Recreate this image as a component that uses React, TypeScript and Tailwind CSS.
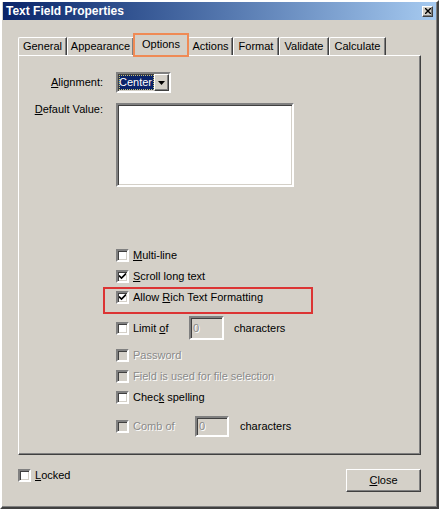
import React from 'react';

const sunken =
  'border-2 border-t-[#808080] border-l-[#808080] border-b-white border-r-white shadow-[inset_1px_1px_0_#404040,inset_-1px_-1px_0_#d4d0c8]';
const raised =
  'border border-t-white border-l-white border-b-[#404040] border-r-[#404040] shadow-[inset_-1px_-1px_0_#808080]';

function U({ children }: { children: React.ReactNode }) {
  return <span className="underline underline-offset-[1px] decoration-1">{children}</span>;
}

function Check({ checked, disabled }: { checked?: boolean; disabled?: boolean }) {
  return (
    <div
      className={`w-[13px] h-[13px] shrink-0 flex items-center justify-center ${sunken} ${
        disabled ? 'bg-[#d4d0c8]' : 'bg-white'
      }`}
    >
      {checked && (
        <svg width="7" height="7" viewBox="0 0 7 7">
          <path d="M0 2.5 L2.5 5 L7 0.5" fill="none" stroke="#000" strokeWidth="1.6" />
        </svg>
      )}
    </div>
  );
}

function Row({
  children,
  checked,
  disabled,
  className = 'h-[21px]'
}: {
  children: React.ReactNode;
  checked?: boolean;
  disabled?: boolean;
  className?: string;
}) {
  return (
    <div className={`relative flex items-center ${className}`}>
      <Check checked={checked} disabled={disabled} />
      <span
        className={`ml-[4px] whitespace-nowrap ${
          disabled ? 'text-[#8a8a8a] [text-shadow:1px_1px_0_#fff]' : 'text-black'
        }`}
      >
        {children}
      </span>
    </div>
  );
}

function NumBox({ w, h }: { w: string; h: string }) {
  return (
    <div className={`${w} ${h} ${sunken} bg-[#d4d0c8] flex items-center pl-[2px] text-[#8a8a8a] [text-shadow:1px_1px_0_#fff]`}>
      0
    </div>
  );
}

const tabs = [
  { label: 'General', w: 'w-[49px]' },
  { label: 'Appearance', w: 'w-[67px]' },
  { label: 'Options', w: 'w-[54px]', active: true },
  { label: 'Actions', w: 'w-[45px]' },
  { label: 'Format', w: 'w-[46px]' },
  { label: 'Validate', w: 'w-[50px]' },
  { label: 'Calculate', w: 'w-[57px]' }
];

export default function App() {
  return (
    <div className="w-[439px] h-[509px] bg-[#d4d0c8] font-['Liberation_Sans',Arial,sans-serif] text-[11px] text-black border-2 border-t-white border-l-white border-b-[#404040] border-r-[#404040] shadow-[inset_-1px_-1px_0_#808080] flex flex-col overflow-hidden">
      {/* Title bar */}
      <div className="h-[18px] mx-px flex items-center justify-between bg-gradient-to-r from-[#0a246a] to-[#a6caf0] pl-[3px] pr-[3px]">
        <span className="text-white font-bold text-[12px] leading-none">Text Field Properties</span>
        <div className={`w-[11px] h-[11px] bg-[#d4d0c8] flex items-center justify-center ${raised}`}>
          <svg width="6" height="6" viewBox="0 0 6 6">
            <path d="M0 0 L6 6 M6 0 L0 6" stroke="#000" strokeWidth="1.4" />
          </svg>
        </div>
      </div>

      {/* Tabs */}
      <div className="mt-[14px] ml-[16px] flex items-end h-[21px]">
        {tabs.map((t) =>
          t.active ? (
            <div
              key={t.label}
              className={`relative z-10 ${t.w} h-[22px] -mb-px bg-[#d4d0c8] border-t border-l border-t-white border-l-white border-r border-r-[#404040] flex items-center justify-center pb-[3px] outline-2 outline-[#ef8a55] -outline-offset-1`}
            >
              {t.label}
            </div>
          ) : (
            <div
              key={t.label}
              className={`${t.w} h-[18px] border-t border-l border-t-white border-l-white border-r border-r-[#404040] shadow-[inset_-1px_0_0_#808080] rounded-tl-[2px] flex items-center justify-center`}
            >
              {t.label}
            </div>
          )
        )}
      </div>

      {/* Panel */}
      <div className={`mx-[16px] h-[400px] shrink-0 ${raised}`}>
        <div className="mt-[16px] grid grid-cols-[84px_1fr] gap-x-[13px] gap-y-[10px]">
          <div className="flex items-center justify-end h-[21px]">
            <span>
              <U>A</U>lignment:
            </span>
          </div>
          <div className={`w-[55px] h-[21px] ${sunken} bg-white flex items-center`}>
            <div className="h-full flex-1 py-px pl-px">
              <div className="h-full bg-[#0a246a] text-white flex items-center outline-1 outline-dotted outline-[#c8c070] -outline-offset-1">
                Center
              </div>
            </div>
            <div className={`w-[15px] h-full bg-[#d4d0c8] flex items-center justify-center ${raised}`}>
              <svg width="7" height="4" viewBox="0 0 7 4">
                <path d="M0 0 L7 0 L3.5 4 Z" fill="#000" />
              </svg>
            </div>
          </div>
          <div className="flex justify-end -mt-[2px]">
            <span>
              <U>D</U>efault Value:
            </span>
          </div>
          <div className={`w-[178px] h-[84px] ${sunken} bg-white`} />
        </div>

        <div className="mt-[58px] ml-[97px] flex flex-col">
          <Row>
            <U>M</U>ulti-line
          </Row>
          <Row checked>
            <U>S</U>croll long text
          </Row>
          <Row checked>
            Allow <U>R</U>ich Text Formatting
            <div className="absolute -left-[13px] top-0 w-[210px] h-[27px] border-2 border-[#dc3434] pointer-events-none" />
          </Row>
          <div className="mt-[6px] h-[28px] flex items-center">
            <Check />
            <span className="ml-[4px] w-[56px]">
              Limit <U>o</U>f
            </span>
            <NumBox w="w-[35px]" h="h-[24px]" />
            <span className="ml-[10px]">characters</span>
          </div>
          <Row disabled className="mt-[3px] h-[21px]">
            Password
          </Row>
          <Row disabled>Field is used for file selection</Row>
          <Row>
            Chec<U>k</U> spelling
          </Row>
          <div className="mt-[4px] h-[28px] flex items-center">
            <Check disabled />
            <span className="ml-[4px] w-[62px] text-[#8a8a8a] [text-shadow:1px_1px_0_#fff]">Comb of</span>
            <NumBox w="w-[34px]" h="h-[21px]" />
            <span className="ml-[11px]">characters</span>
          </div>
        </div>
      </div>

      {/* Bottom */}
      <div className="mt-[14px] mx-[16px] flex justify-between items-start">
        <div className="flex items-center h-[13px]">
          <Check />
          <span className="ml-[4px]">
            <U>L</U>ocked
          </span>
        </div>
        <div className={`w-[75px] h-[23px] flex items-center justify-center ${raised}`}>
          <span>
            <U>C</U>lose
          </span>
        </div>
      </div>
    </div>
  );
}
